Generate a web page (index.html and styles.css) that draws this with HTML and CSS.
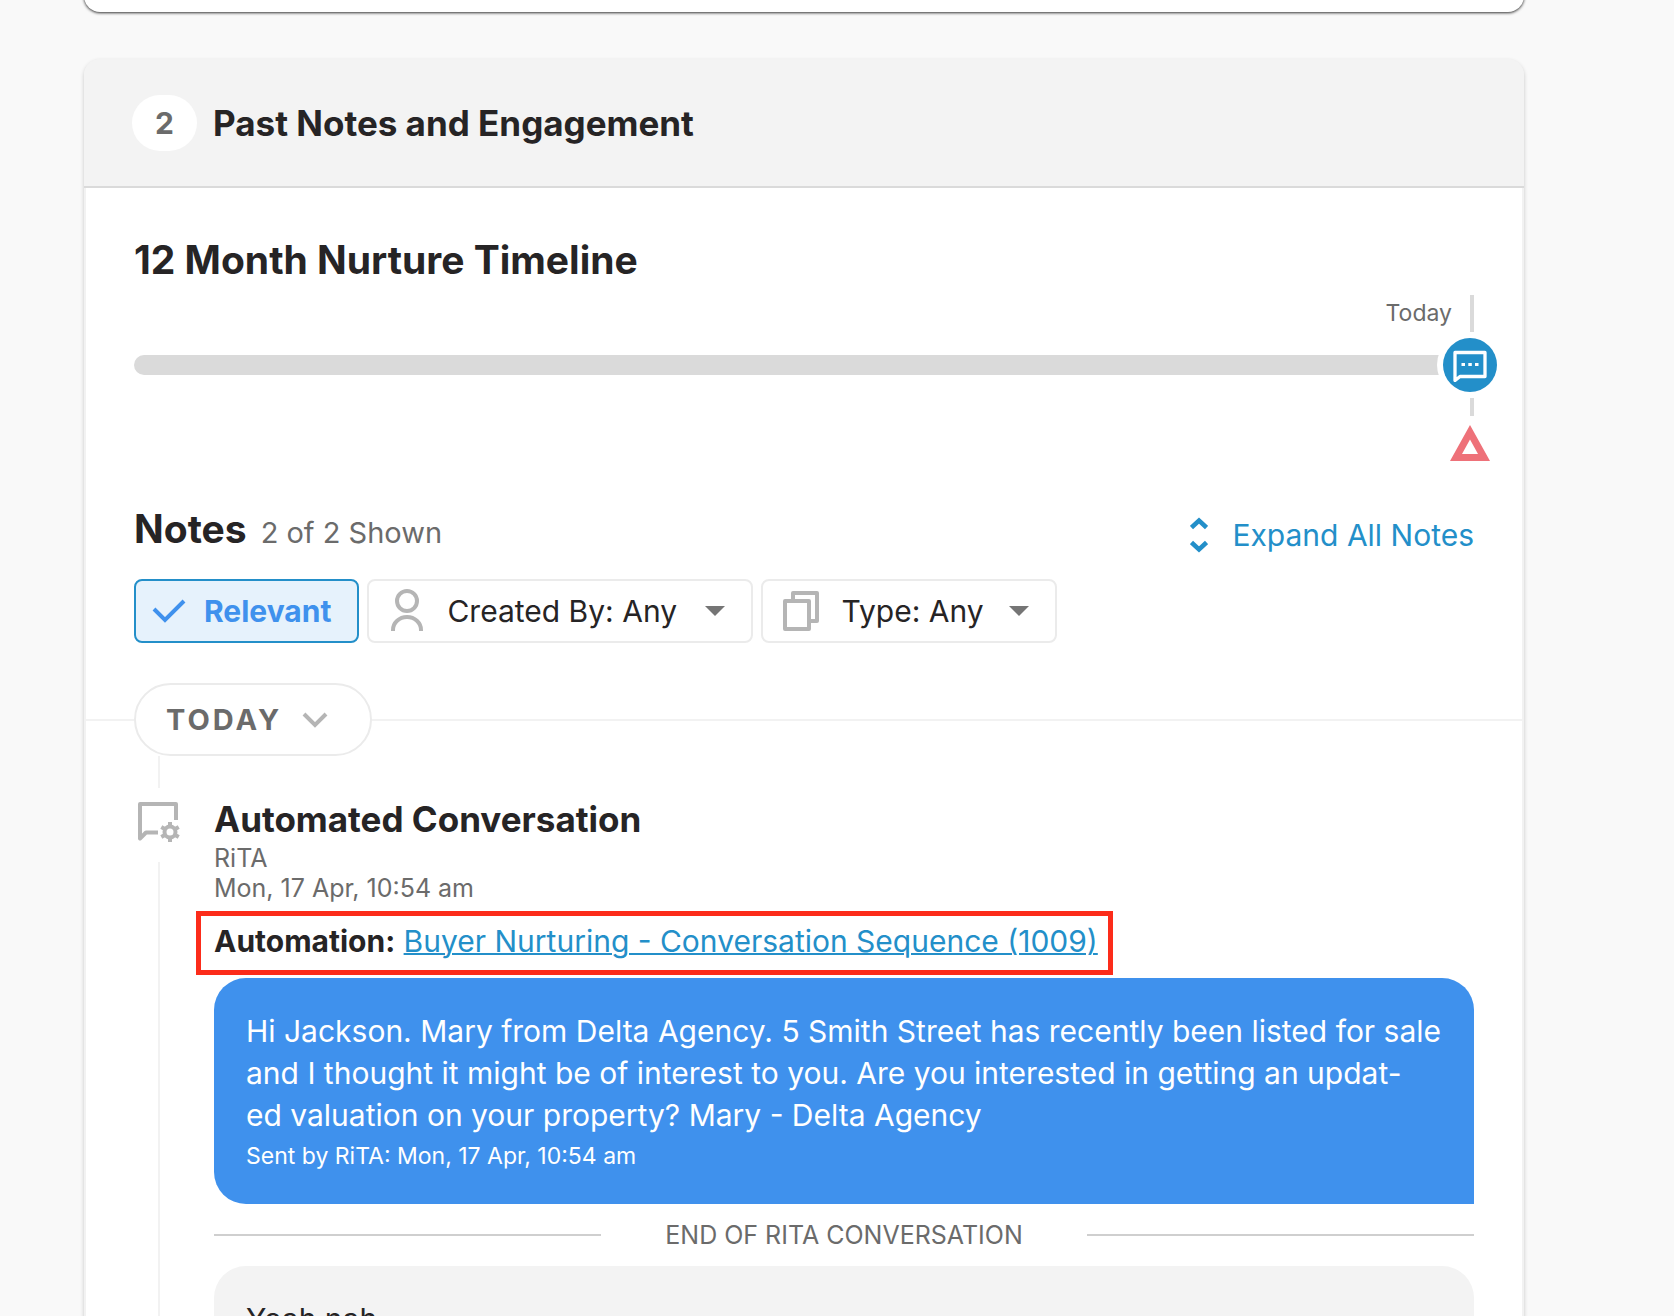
FILE: index.html
```html
<!DOCTYPE html>
<html lang="en">
<head>
    <meta charset="UTF-8">
    <meta name="viewport" content="width=device-width, initial-scale=1.0">
    <title>Past Notes and Engagement</title>
    <link rel="stylesheet" href="styles.css">
</head>
<body>
    <main class="page">
        <section class="card card-previous"></section>

        <section class="card">
            <header class="card-header">
                <span class="step">2</span>
                <h2>Past Notes and Engagement</h2>
            </header>

            <div class="card-body">
                <h3 class="section-title">12 Month Nurture Timeline</h3>
                <div class="timeline">
                    <div class="timeline-top">
                        <span>Today</span>
                        <i class="tick"></i>
                    </div>
                    <div class="timeline-track">
                        <div class="bar"></div>
                        <div class="marker">
                            <svg width="34" height="34" viewBox="0 0 34 34" fill="none">
                                <path d="M2 4.500h30v24H7l-5 4z" stroke="#fff" stroke-width="3.300" stroke-linejoin="round"/>
                                <path d="M8.500 15H12v3H8.500zM15.300 15h3.500v3h-3.500zM22 15h3.500v3H22z" fill="#fff"/>
                            </svg>
                        </div>
                    </div>
                    <div class="timeline-bottom">
                        <i class="tick tick-short"></i>
                        <svg class="alert" width="40" height="36" viewBox="0 0 40 36">
                            <path d="M20 0l20 36H0zM20 14.500L12 29h16z" fill="#ee7179" fill-rule="evenodd"/>
                        </svg>
                    </div>
                </div>

                <div class="notes-head">
                    <h3 class="section-title">Notes</h3>
                    <span class="count">2 of 2 Shown</span>
                    <button class="expand" type="button">
                        <svg width="18" height="36" viewBox="0 0 18 36" fill="none" stroke="#238fc9" stroke-width="4.500">
                            <path d="M1.500 10.500L9 3.500l7.500 7M1.500 25.500L9 32.500l7.500-7"/>
                        </svg>
                        Expand All Notes
                    </button>
                </div>

                <div class="filters">
                    <button class="filter filter-active" type="button" aria-pressed="true">
                        <svg width="34" height="24" viewBox="0 0 34 24" fill="none" stroke="#3f91ed" stroke-width="4">
                            <path d="M2 10l11 11L32 2"/>
                        </svg>
                        Relevant
                    </button>
                    <label class="filter">
                        <svg width="36" height="44" viewBox="0 0 36 44" fill="none" stroke="#b5b5b5" stroke-width="4">
                            <rect x="8" y="2" width="20" height="20" rx="10"/>
                            <path d="M4 42v-1a14 13 0 0 1 28 0v1"/>
                        </svg>
                        <select class="created-by" aria-label="Created by">
                            <option>Created By: Any</option>
                        </select>
                        <svg width="20" height="10" viewBox="0 0 20 10"><path d="M0 0h20L10 10z" fill="#757575"/></svg>
                    </label>
                    <label class="filter">
                        <svg width="36" height="40" viewBox="0 0 36 40" fill="none" stroke="#b5b5b5" stroke-width="4" stroke-linejoin="round">
                            <path d="M10 8V2h24v28h-6"/>
                            <path d="M2 10h24v28H2z"/>
                        </svg>
                        <select class="note-type" aria-label="Type">
                            <option>Type: Any</option>
                        </select>
                        <svg width="20" height="10" viewBox="0 0 20 10"><path d="M0 0h20L10 10z" fill="#757575"/></svg>
                    </label>
                </div>

                <div class="day">
                    <button class="day-toggle" type="button">
                        TODAY
                        <svg width="26" height="16" viewBox="0 0 26 16" fill="none" stroke="#b5b5b5" stroke-width="4">
                            <path d="M2 2l11 11L24 2"/>
                        </svg>
                    </button>
                </div>

                <article class="entry">
                    <div class="rail">
                        <svg width="42" height="46" viewBox="0 0 42 46" fill="none" stroke="#b5b5b5" stroke-width="4">
                            <path d="M20 30.500H8l-6 6V2h36v16" stroke-linejoin="round"/>
                            <circle cx="32" cy="30" r="5.500"/>
                            <path d="M32 20v4M32 36v4M23.300 25l3.500 2M37.200 33l3.500 2M23.300 35l3.500-2M37.200 27l3.500-2"/>
                        </svg>
                    </div>
                    <div class="entry-content">
                        <h4>Automated Conversation</h4>
                        <p class="meta">RiTA</p>
                        <p class="meta">Mon, 17 Apr, 10:54 am</p>
                        <p class="automation"><b>Automation:</b> <a href="#">Buyer Nurturing - Conversation Sequence (1009)</a></p>
                        <div class="bubble bubble-sent">
                            <p>Hi Jackson. Mary from Delta Agency. 5 Smith Street has recently been listed for sale<br>and I thought it might be of interest to you. Are you interested in getting an updat-<br>ed valuation on your property? Mary - Delta Agency</p>
                            <p class="sent-by">Sent by RiTA: Mon, 17 Apr, 10:54 am</p>
                        </div>
                        <div class="divider">END OF RITA CONVERSATION</div>
                        <div class="bubble">
                            <p>Yeah nah</p>
                        </div>
                    </div>
                </article>
            </div>
        </section>
    </main>
</body>
</html>
```

FILE: styles.css
```css
* {
    box-sizing: border-box;
}
body {
    font-family: Inter, "Open Sans", sans-serif;
    font-size: 30px;
    background-color: #f9f9f9;
    color: #262425;
    margin: 0;
}
h2, h3, h4, p {
    margin: 0;
}
button, select {
    font: inherit;
    color: inherit;
    background: none;
    border: none;
    padding: 0;
    cursor: pointer;
}
svg {
    flex: none;
}
.page {
    height: 100vh;
    overflow: hidden;
    padding: 0 150px 0 84px;
}
.card {
    background: white;
    border: 2px solid #f2f2f2;
    border-radius: 16px;
    box-shadow: 0 2px 4px rgba(0, 0, 0, 0.2);
}
.card-previous {
    height: 40px;
    margin: -28px 0 47px;
    border: none;
    box-shadow: 0 1px 3px rgba(0, 0, 0, 0.8);
}

/* header */
.card-header {
    display: flex;
    align-items: center;
    gap: 16px;
    height: 129px;
    margin: -2px -2px 2px;
    padding: 0 48px;
    background: #f3f3f3;
    border-bottom: 2px solid #dadada;
    border-radius: 16px 16px 0 0;
}
.step {
    width: 65px;
    line-height: 56px;
    border-radius: 28px;
    background: white;
    color: #6b6b6b;
    font-size: 30px;
    font-weight: 700;
    text-align: center;
}
h2, h4 {
    font-size: 35px;
    font-weight: 700;
    line-height: 40px;
}
.card-body {
    padding: 48px;
}
.section-title {
    font-size: 39px;
    font-weight: 700;
    line-height: 44px;
}

/* timeline */
.timeline {
    margin: 13px 0 46px;
}
.timeline-top {
    display: flex;
    justify-content: flex-end;
    gap: 18px;
    color: #6b6b6b;
    font-size: 23px;
    line-height: 37px;
}
.tick {
    width: 4px;
    height: 37px;
    background: #dadada;
}
.tick-short {
    height: 18px;
}
.timeline-track {
    display: flex;
    align-items: center;
    margin: 6px -23px 6px 0;
}
.bar {
    flex: 1;
    height: 20px;
    border-radius: 10px 0 0 10px;
    background: #dadada;
}
.marker {
    display: flex;
    align-items: center;
    justify-content: center;
    width: 54px;
    height: 54px;
    border-radius: 50%;
    background: #238fc9;
    box-shadow: 0 0 0 6px white;
}
.timeline-bottom {
    display: flex;
    flex-direction: column;
    align-items: flex-end;
    gap: 9px;
}
.alert {
    margin-right: -16px;
}

/* notes */
.notes-head {
    display: flex;
    align-items: baseline;
    gap: 14px;
    margin-bottom: 28px;
}
.count {
    color: #6b6b6b;
    font-size: 29px;
}
.expand {
    display: flex;
    align-items: center;
    align-self: flex-end;
    gap: 24px;
    height: 32px;
    margin-left: auto;
    color: #238fc9;
}
.filters {
    display: flex;
    gap: 8px;
    margin-bottom: 40px;
}
.filter {
    display: flex;
    align-items: center;
    gap: 22px;
    height: 64px;
    padding: 0 26px 0 20px;
    border: 2px solid #ebebeb;
    border-radius: 8px;
}
.filter-active {
    gap: 18px;
    padding: 0 26px 0 16px;
    border-color: #238fc9;
    background: #e6f2fc;
    color: #3f91ed;
    font-weight: 700;
}
.filter select {
    appearance: none;
    outline: none;
}
.created-by {
    width: 236px;
}
.note-type {
    width: 146px;
}

/* day separator runs edge to edge behind the pill */
.day {
    display: flex;
    align-items: center;
    margin: 0 -48px;
}
.day::before,
.day::after {
    content: "";
    width: 48px;
    height: 2px;
    background: #f2f2f2;
}
.day::after {
    flex: 1;
}
.day-toggle {
    display: flex;
    align-items: center;
    gap: 20px;
    height: 73px;
    padding: 0 42px 0 30px;
    border: 2px solid #ebebeb;
    border-radius: 37px;
    color: #6b6b6b;
    font-size: 29px;
    font-weight: 700;
    letter-spacing: 3px;
}

/* entry */
.entry {
    display: flex;
    gap: 30px;
}
.rail {
    display: flex;
    flex-direction: column;
    align-items: center;
    gap: 14px;
    width: 50px;
}
.rail::before,
.rail::after {
    content: "";
    width: 2px;
    height: 32px;
    background: #f2f2f2;
}
.rail::after {
    flex: 1;
}
.entry-content {
    flex: 1;
    padding-top: 43px;
}
h4 {
    margin-bottom: 4px;
}
.meta {
    color: #6b6b6b;
    font-size: 25px;
    line-height: 30px;
}
.automation {
    width: fit-content;
    margin: 8px 0 3px -18px;
    padding: 0 10px 4px 13px;
    border: 5px solid #fc2c1a;
    line-height: 50px;
    white-space: nowrap;
}
.automation a {
    color: #238fc9;
    text-decoration-thickness: 2px;
}
.bubble {
    padding: 32px;
    border-radius: 32px;
    background: #f3f3f3;
    line-height: 42px;
}
.bubble-sent {
    padding-bottom: 28px;
    border-bottom-right-radius: 0;
    background: #3f91ed;
    color: white;
    white-space: nowrap;
}
.sent-by {
    font-size: 23px;
    line-height: 40px;
}
.divider {
    display: flex;
    align-items: center;
    gap: 64px;
    color: #6b6b6b;
    font-size: 25px;
    line-height: 62px;
}
.divider::before,
.divider::after {
    content: "";
    flex: 1;
    height: 2px;
    background: #cfcfcf;
}
```
